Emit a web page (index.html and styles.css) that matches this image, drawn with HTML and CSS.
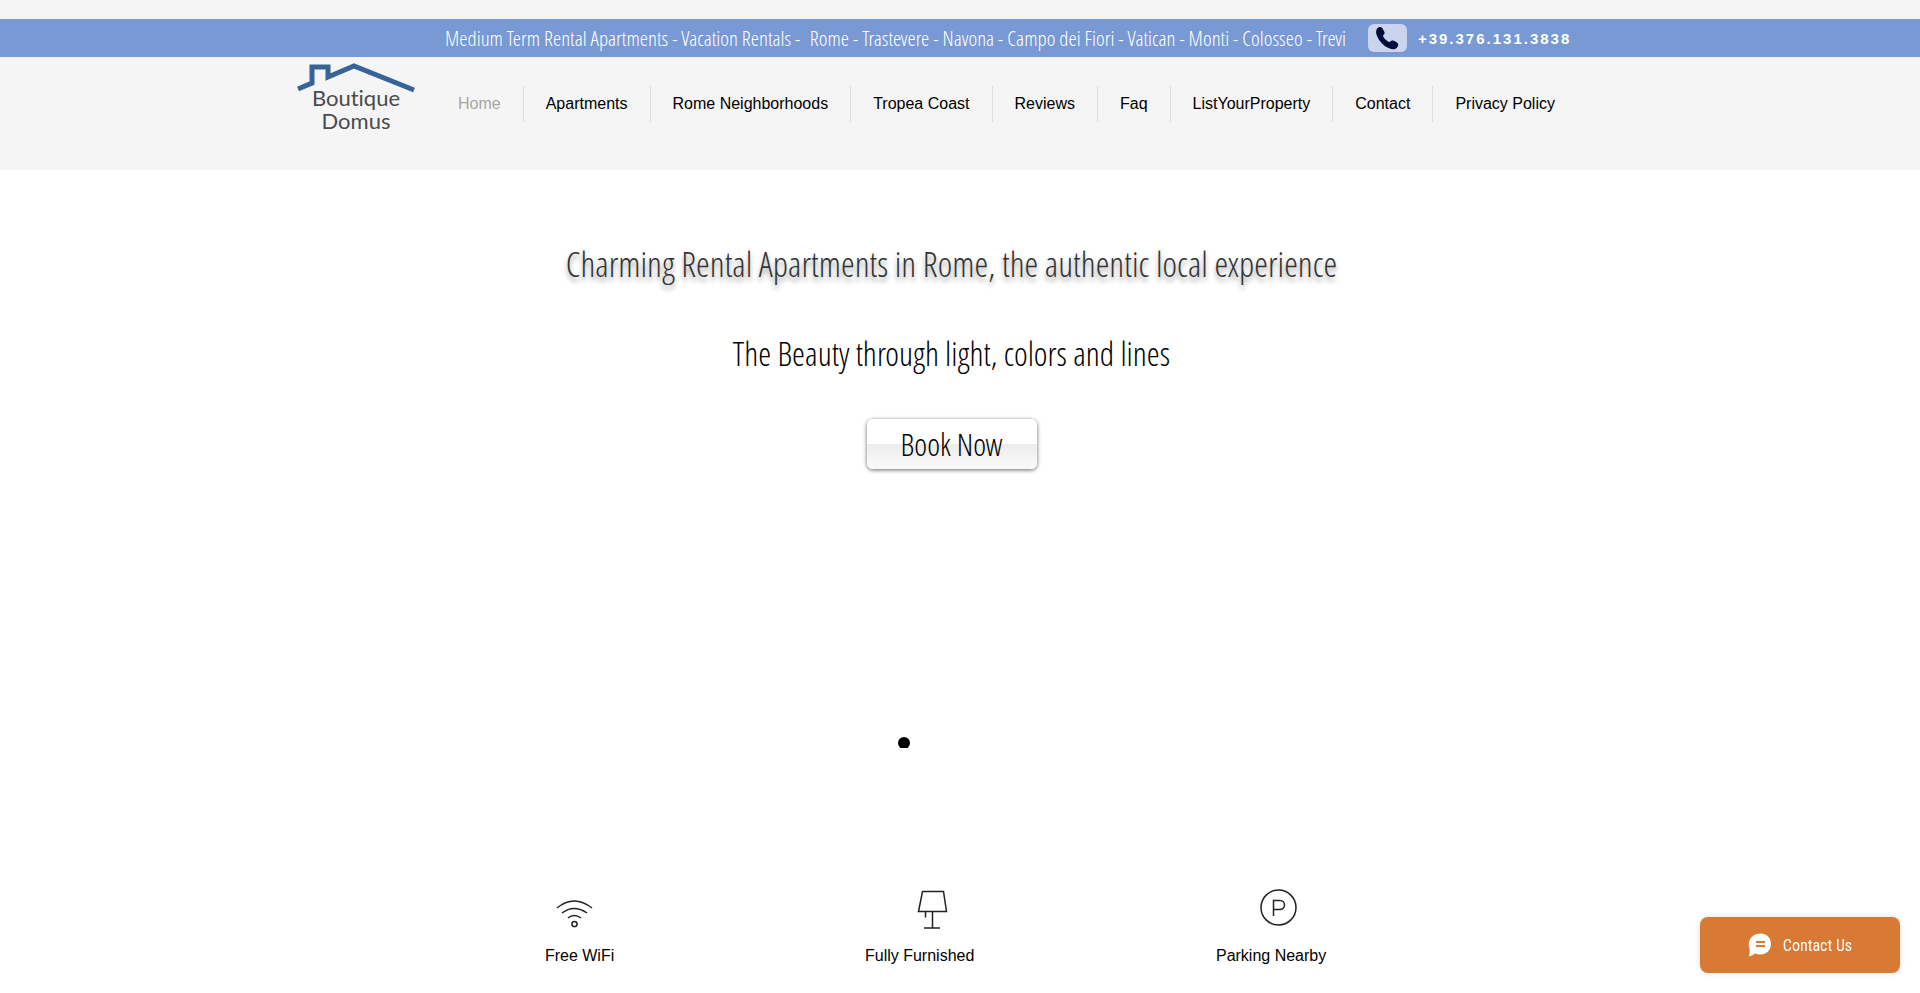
FILE: index.html
```html
<!DOCTYPE html>
<html lang="en">
<head>
    <meta charset="UTF-8">
    <meta name="viewport" content="width=device-width, initial-scale=1.0">
    <title>Boutique Domus</title>
    <link rel="stylesheet" href="styles.css">
</head>
<body>
    <header class="site-header">
        <div class="top-bar">
            <div class="wrap top-bar-inner">
                <p class="tagline">Medium Term Rental Apartments - Vacation Rentals - &nbsp;Rome - Trastevere - Navona - Campo dei Fiori - Vatican - Monti - Colosseo - Trevi</p>
                <a href="tel:+393761313838" class="phone-button" aria-label="Call us">
                    <svg width="24" height="24" viewBox="0 0 24 24">
                        <path d="M2 2.700C3.800 .6 6.200 .5 7.600 2.600L9.300 5.700C10 7.300 9.500 8.400 7.900 9.700C9 12.400 11.500 14.900 14.400 16.300C15.500 14.700 16.700 14 18.400 14.600L22 16.600C23.900 17.900 23.600 20.200 21.700 22C19.900 23.700 17.200 23.700 14 22.300C8.400 19.800 4.300 15.500 2.100 10.200C.8 7.100 .7 4.400 2 2.700Z"/>
                    </svg>
                </a>
                <a href="tel:+393761313838" class="phone-number">+39.376.131.3838</a>
            </div>
        </div>

        <div class="wrap header-main">
            <a href="#" class="logo">
                <svg class="logo-roof" width="118" height="30" viewBox="0 0 118 30">
                    <path d="M1 26L15 20V4H31V14L57 3L117 27" fill="none" stroke="#366499" stroke-width="5"/>
                </svg>
                <span>Boutique</span>
                <span>Domus</span>
            </a>
            <nav class="main-nav">
                <a href="#" class="active">Home</a>
                <a href="#">Apartments</a>
                <a href="#">Rome Neighborhoods</a>
                <a href="#">Tropea Coast</a>
                <a href="#">Reviews</a>
                <a href="#">Faq</a>
                <a href="#">ListYourProperty</a>
                <a href="#">Contact</a>
                <a href="#">Privacy Policy</a>
            </nav>
        </div>
    </header>

    <main>
        <section class="hero">
            <h1>Charming Rental Apartments in Rome, the authentic local experience</h1>
            <h2>The Beauty through light, colors and lines</h2>
            <button type="button" class="book-button">Book Now</button>
        </section>

        <!-- Slideshow navigation -->
        <div class="slide-dots">
            <button type="button" class="dot" aria-label="Slide 1"></button>
        </div>

        <section class="features">
            <div class="feature">
                <svg width="64" height="40" viewBox="0 0 64 40">
                    <path d="M9 19Q26 5 44 19M14 24Q26 15 39 24M20 29Q26 24 33 29"/>
                    <circle cx="26.500" cy="35" r="2.600"/>
                </svg>
                <p>Free WiFi</p>
            </div>
            <div class="feature">
                <svg width="64" height="40" viewBox="0 0 64 40">
                    <path d="M34.500 2.500H55.500L58.500 22.500H30.500ZM44.500 22.500V39M36 39H52M37.500 22.500V28.500"/>
                </svg>
                <p>Fully Furnished</p>
            </div>
            <div class="feature">
                <svg width="64" height="40" viewBox="0 0 64 40">
                    <circle cx="39.500" cy="18.500" r="17.500"/>
                    <path d="M34.500 27V11.500H41A4.500 4.500 0 0 1 41 20.500H34.500"/>
                </svg>
                <p>Parking Nearby</p>
            </div>
        </section>
    </main>

    <button type="button" class="contact-button">
        <svg width="24" height="24" viewBox="0 0 24 24">
            <path d="M12.500 .5C18.700 .5 23 5 23 11C23 17.200 18.500 21.500 12.500 21.500C10.400 21.500 8.600 21.200 7.200 20.300C5.300 22.200 3.100 23.200 .7 23.300C1.700 20.800 1.900 18.300 1.500 15.500C.8 13.900 .6 12.500 .8 11C1 5 6 .5 12.500 .5Z" fill="#fff"/>
            <path d="M8 9H17M8 13H17" stroke="#d97a34" stroke-width="2"/>
        </svg>
        Contact Us
    </button>
</body>
</html>
```
FILE: styles.css
```css
* {
    box-sizing: border-box;
}

body {
    margin: 0;
    background-color: #fff;
    color: #000;
    font-family: "Liberation Sans", Arial, sans-serif;
    font-size: 16px;
}

a {
    color: inherit;
    text-decoration: none;
}

h1, h2, p {
    margin: 0;
    font-weight: 300;
}

.wrap {
    max-width: 1326px;
    margin: 0 auto;
}

/* Header */
.site-header {
    background-color: #f5f5f5;
    padding-top: 19px;
    padding-bottom: 38px;
}

.top-bar {
    background-color: #7899d3;
    color: #fff;
}

.top-bar-inner {
    display: flex;
    align-items: center;
    min-height: 38px;
    padding-left: 148px;
}

.tagline {
    font-family: "Open Sans Condensed Light", "Roboto Condensed", sans-serif;
    font-size: 21px;
    line-height: 28px;
    white-space: nowrap;
}

.phone-button {
    display: flex;
    align-items: center;
    justify-content: center;
    flex-shrink: 0;
    width: 39px;
    height: 28px;
    margin-left: 22px;
    background-color: #cad5ed;
    border-radius: 6px;
    fill: #030b3b;
}

.phone-number {
    margin-left: 11px;
    font-size: 15px;
    font-weight: bold;
    letter-spacing: 2px;
}

.header-main {
    display: flex;
    align-items: flex-start;
    gap: 21px;
    padding-top: 6px;
}

.logo {
    display: flex;
    flex-direction: column;
    align-items: center;
    width: 118px;
    font-family: Lato, sans-serif;
    font-size: 22px;
    font-variant-ligatures: none;
    line-height: 23px;
    color: #4b4b4b;
}

.logo-roof {
    margin-bottom: -7px;
}

.main-nav {
    display: flex;
    padding-top: 23px;
}

.main-nav a {
    padding: 0 22px;
    line-height: 36px;
    border-right: 1px solid #dedede;
    white-space: nowrap;
}

.main-nav a:last-child {
    border-right: none;
}

.main-nav .active {
    color: #a6a6a6;
}

/* Hero */
.hero {
    display: flex;
    flex-direction: column;
    align-items: center;
    padding: 70px 17px 0 0;
    font-family: "Open Sans Condensed Light", "Roboto Condensed", sans-serif;
}

.hero h1 {
    font-size: 35px;
    line-height: 48px;
    color: #333;
    text-shadow: 0 4px 5px rgba(0, 0, 0, 0.4);
}

.hero h2 {
    margin-top: 42px;
    font-size: 33px;
    line-height: 48px;
}

.book-button {
    width: 170px;
    height: 50px;
    margin-top: 41px;
    padding: 0;
    border: none;
    border-radius: 6px;
    background: linear-gradient(#fff 50%, #ececec 50%, #fafafa);
    box-shadow: 0 1px 4px rgba(0, 0, 0, 0.6);
    font-family: inherit;
    font-size: 31px;
    font-weight: 300;
    color: #000;
    cursor: pointer;
}

.slide-dots {
    display: flex;
    justify-content: center;
    height: 11px;
    margin-top: 268px;
    padding-right: 113px;
    overflow: hidden;
}

.dot {
    width: 12px;
    height: 12px;
    padding: 0;
    border: none;
    border-radius: 50%;
    background-color: #000;
}

/* Features */
.features {
    display: grid;
    grid-template-columns: 15fr 15fr 16fr;
    max-width: 1101px;
    margin: 0 auto;
    padding: 141px 58px 16px 0;
}

.feature {
    display: flex;
    flex-direction: column;
    align-items: center;
    gap: 18px;
}

.feature svg {
    fill: none;
    stroke: #222;
    stroke-width: 1.5;
}

/* Floating contact button */
.contact-button {
    position: fixed;
    right: 20px;
    bottom: 20px;
    display: flex;
    align-items: center;
    justify-content: center;
    gap: 11px;
    width: 200px;
    height: 56px;
    border: none;
    border-radius: 8px;
    background-color: #d97a34;
    box-shadow: 0 0 6px rgba(0, 0, 0, 0.12);
    font-family: "Roboto Condensed", "Open Sans Condensed Light", sans-serif;
    font-size: 16px;
    color: #fff;
    cursor: pointer;
}
```
